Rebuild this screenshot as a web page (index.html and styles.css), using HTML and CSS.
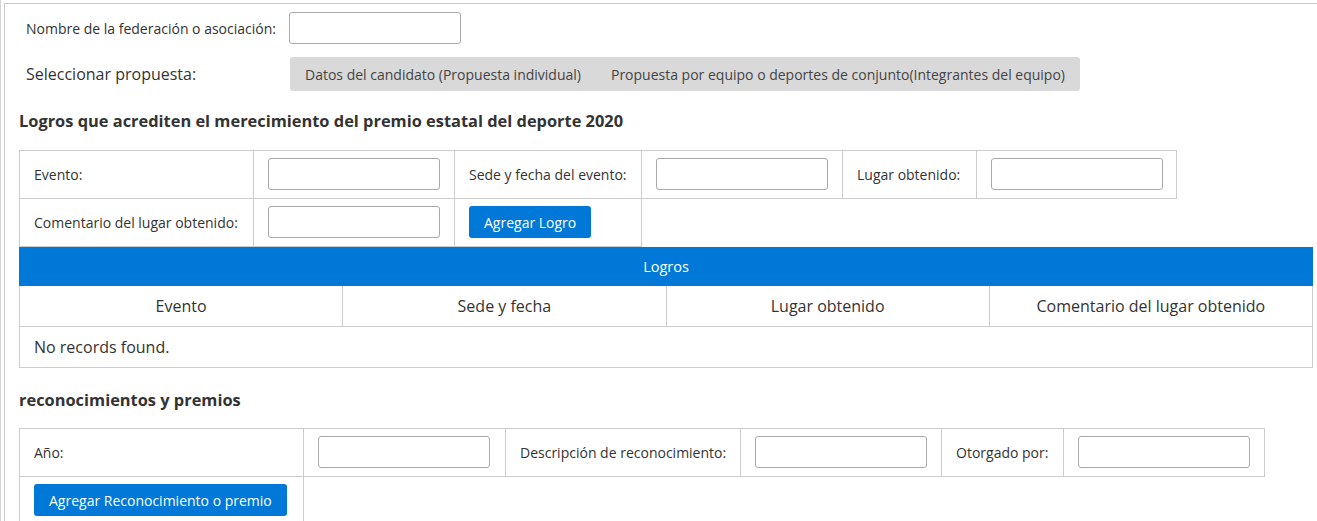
FILE: index.html
```html
<!DOCTYPE html>
<html lang="es">
<head>
    <meta charset="UTF-8">
    <title>Premio estatal del deporte 2020</title>
    <link rel="stylesheet" href="styles.css">
</head>
<body>
<div class="page">
    <div class="form-row">
        <label class="row-label">Nombre de la federación o asociación:</label>
        <input type="text" class="field">
    </div>
    <div class="form-row propuesta">
        <span class="row-label big">Seleccionar propuesta:</span>
        <div class="tabs">
            <span class="tab">Datos del candidato (Propuesta individual)</span>
            <span class="tab">Propuesta por equipo o deportes de conjunto(Integrantes del equipo)</span>
        </div>
    </div>

    <h3 class="section-title">Logros que acrediten el merecimiento del premio estatal del deporte 2020</h3>
    <table class="form-table logros-form">
        <colgroup>
            <col style="width:234px"><col style="width:201px"><col style="width:187px">
            <col style="width:201px"><col style="width:134px"><col style="width:200px">
        </colgroup>
        <tr>
            <td>Evento:</td>
            <td><input type="text" class="field"></td>
            <td>Sede y fecha del evento:</td>
            <td><input type="text" class="field"></td>
            <td>Lugar obtenido:</td>
            <td><input type="text" class="field"></td>
        </tr>
        <tr>
            <td>Comentario del lugar obtenido:</td>
            <td><input type="text" class="field"></td>
            <td><button class="btn">Agregar Logro</button></td>
        </tr>
    </table>

    <table class="data-table">
        <thead>
            <tr><th colspan="4" class="caption">Logros</th></tr>
            <tr>
                <th>Evento</th>
                <th>Sede y fecha</th>
                <th>Lugar obtenido</th>
                <th>Comentario del lugar obtenido</th>
            </tr>
        </thead>
        <tbody>
            <tr><td colspan="4">No records found.</td></tr>
        </tbody>
    </table>

    <h3 class="section-title second">reconocimientos y premios</h3>
    <table class="form-table premios-form">
        <colgroup>
            <col style="width:284px"><col style="width:202px"><col style="width:235px">
            <col style="width:201px"><col style="width:122px"><col style="width:201px">
        </colgroup>
        <tr>
            <td>Año:</td>
            <td><input type="text" class="field"></td>
            <td>Descripción de reconocimiento:</td>
            <td><input type="text" class="field"></td>
            <td>Otorgado por:</td>
            <td><input type="text" class="field"></td>
        </tr>
        <tr>
            <td><button class="btn">Agregar Reconocimiento o premio</button></td>
        </tr>
    </table>
</div>
</body>
</html>
```

FILE: styles.css
```css
body {
    margin: 0;
    border-left: 1px solid #d4d4d4;
    min-height: 521px;
    background: #fff;
    color: #333;
    font-family: "Open Sans", "Liberation Sans", sans-serif;
    font-size: 14px;
}
.page {
    margin: 3px 0 0 3px;
    border-left: 1px solid #c8c8c8;
    border-top: 1px solid #c8c8c8;
    padding: 8px 4px 0 14px;
    min-height: 520px;
}
.form-row {
    display: flex;
    align-items: center;
    padding-left: 7px;
}
.row-label {
    width: 263px;
}
.row-label.big {
    font-size: 16px;
    width: 264px;
}
.propuesta {
    margin-top: 13px;
}
.field {
    box-sizing: border-box;
    width: 172px;
    height: 32px;
    border: 1px solid #a9a9a9;
    border-radius: 3px;
    background: #fff;
    margin: 0;
    vertical-align: middle;
}
.tabs {
    display: flex;
    background: #d9d9d9;
    border-radius: 3px;
    height: 34px;
    align-items: center;
}
.tab {
    padding: 0 15px;
    color: #444;
}
.section-title {
    margin: 19px 0 18px 0;
    font-size: 16.4px;
    line-height: 22px;
    font-weight: bold;
    color: #333;
}
.section-title.second {
    margin: 21px 0 17px 0;
}
.form-table {
    border-collapse: collapse;
    table-layout: fixed;
}
.form-table td {
    border: 1px solid #ccc;
    height: 48px;
    padding: 0 14px 1px;
    box-sizing: border-box;
    white-space: nowrap;
}
.logros-form {
    width: 1157px;
}
.premios-form {
    width: 1245px;
}
.btn {
    background: #0078d7;
    color: #fff;
    border: none;
    border-radius: 3px;
    height: 32px;
    padding: 0 15px;
    font-family: "Open Sans", "Liberation Sans", sans-serif;
    font-size: 14px;
    vertical-align: middle;
    cursor: pointer;
}
.data-table {
    width: 1294px;
    border-collapse: collapse;
    table-layout: fixed;
}
.data-table th {
    border: 1px solid #ccc;
    height: 41px;
    padding: 0;
    box-sizing: border-box;
    font-weight: normal;
    font-size: 16px;
    color: #333;
}
.data-table th.caption {
    background: #0078d7;
    border-color: #0078d7;
    color: #fff;
    height: 38px;
    font-size: 14.5px;
}
.data-table td {
    border: 1px solid #ccc;
    height: 41px;
    padding: 0 14px;
    box-sizing: border-box;
    font-size: 16px;
}
```
